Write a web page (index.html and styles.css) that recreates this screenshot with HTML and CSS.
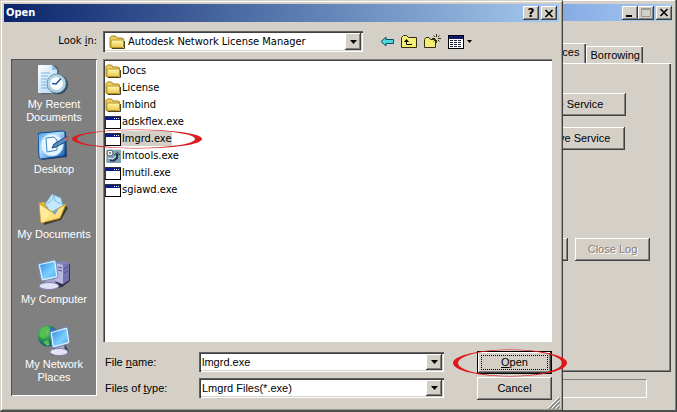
FILE: index.html
```
<!DOCTYPE html>
<html lang="en">
	<head>
		<meta charset="UTF-8" />
		<meta name="viewport" content="width=device-width, initial-scale=1.0" />
		<title>Open</title>
		<link rel="stylesheet" href="styles.css">
	</head>
	<body>
		<!-- shared icons -->
		<svg class="defs" width="0" height="0" aria-hidden="true">
			<defs>
				<linearGradient id="gFolder" x1="0" y1="0" x2="0" y2="1">
					<stop offset="0" stop-color="#fff8b0" /><stop offset="1" stop-color="#e8c84c" />
				</linearGradient>
				<linearGradient id="gScreen" x1="0" y1="0" x2="1" y2="1">
					<stop offset="0" stop-color="#2f8cec" /><stop offset="0.6" stop-color="#7cd0fa" /><stop offset="1" stop-color="#50a8f0" />
				</linearGradient>
				<linearGradient id="gPaper" x1="0" y1="0" x2="1" y2="1">
					<stop offset="0" stop-color="#ffffff" /><stop offset="1" stop-color="#a8d4f6" />
				</linearGradient>
				<linearGradient id="gBlue" x1="0" y1="0" x2="1" y2="1">
					<stop offset="0" stop-color="#4a98e4" /><stop offset="0.4" stop-color="#b4e0fc" /><stop offset="1" stop-color="#0c50b4" />
				</linearGradient>
				<radialGradient id="gGlobe" cx="0.35" cy="0.3" r="0.8">
					<stop offset="0" stop-color="#8ae07a" /><stop offset="0.45" stop-color="#289a48" /><stop offset="1" stop-color="#0a3c9c" />
				</radialGradient>
			</defs>
			<symbol id="folder" viewBox="0 0 16 16">
				<path d="M1 13V3.500L2.500 2H6.500L8 4H13.500L14.500 5V13L13.500 14H2Z" fill="#e9cf5c" stroke="#a88418" />
				<path d="M2 13.500V7L3.500 6H14.500V12.500L13.500 13.500Z" fill="url(#gFolder)" stroke="#b89428" />
				<path d="M15.500 7V14.500H3" fill="none" stroke="#4c4220" />
			</symbol>
			<symbol id="exe" viewBox="0 0 16 16">
				<rect x="0.500" y="2.500" width="15" height="12" fill="#fff" stroke="#303030" />
				<rect x="1" y="3" width="14" height="3" fill="#0a1a8c" />
				<path d="M9 4.500h1M11 4.500h1M13 4.500h1" stroke="#fff" />
				<path d="M0 14.500H16M15.500 3V15" stroke="#000" />
			</symbol>
			<symbol id="tools" viewBox="0 0 16 16">
				<rect x="1" y="2" width="15" height="13" fill="#7ca2b0" />
				<path d="M1 2H16M1.500 2V15" stroke="#a8c0c8" />
				<circle cx="5" cy="5" r="3" fill="#f4f4ec" stroke="#59636a" />
				<circle cx="5" cy="5" r="1" fill="#59636a" />
				<path d="M5 12.500H9L12 10V6" fill="none" stroke="#25315c" stroke-width="2" />
				<path d="M9.500 7L12 4.500L15 7" fill="none" stroke="#25315c" />
				<path d="M3 10L8 11L11 8" fill="none" stroke="#e8e8e8" />
			</symbol>
			<symbol id="close" viewBox="0 0 10 9">
				<path d="M1.500 1L8.500 8M8.500 1L1.500 8" stroke="#000" stroke-width="1.600" />
			</symbol>
			<symbol id="arrow" viewBox="0 0 7 4"><path d="M0 0H7L3.500 4Z" fill="#000" /></symbol>
		</svg>

		<div class="desktop">
			<form class="dialog" onsubmit="return false">
				<div class="titlebar">
					<h1>Open</h1>
					<button type="button" class="caption" aria-label="Help">?</button>
					<button type="button" class="caption" aria-label="Close"><svg width="10" height="9"><use href="#close" /></svg></button>
				</div>

				<div class="content">
					<label class="look-label" for="lookin">Look <u>i</u>n:</label>
					<div class="look-row">
						<div class="combo look">
							<svg width="16" height="16"><use href="#folder" /></svg>
							<select id="lookin">
								<option>Autodesk Network License Manager</option>
							</select>
							<span class="drop"><svg width="7" height="4"><use href="#arrow" /></svg></span>
						</div>
						<div class="toolbar">
							<button type="button" aria-label="Back">
								<svg width="14" height="16" viewBox="0 0 14 16"><path d="M1 7.500L6 3V5.500H13.500V9.500H6V12Z" fill="#4ad8dc" stroke="#075060" /></svg>
							</button>
							<button type="button" aria-label="Up one level">
								<svg width="16" height="16" viewBox="0 0 16 16">
									<path d="M0.500 13.500V3.500L2.500 1.500H5.500L7.500 3.500H15.500V13.500Z" fill="#f6ee70" stroke="#333010" />
									<path d="M3 8L5.500 5L8 8Z" fill="#000" />
									<path d="M5.500 7V10.500H11" fill="none" stroke="#000" />
								</svg>
							</button>
							<button type="button" aria-label="New folder">
								<svg width="17" height="16" viewBox="0 0 17 16">
									<path d="M0.500 13.500V5.500L2 3.500H5L6.500 5.500H11.500V13.500Z" fill="#f6ee70" stroke="#333010" />
									<path d="M12.500 0V3M12.500 6V9M8 4.500H11M14 4.500H17M9.500 1.500L11 3M15.500 1.500L14 3M15.500 7.500L14 6M9.500 7.500L11 6" stroke="#333010" />
								</svg>
							</button>
							<button type="button" class="views" aria-label="Views">
								<svg width="16" height="14" viewBox="0 0 16 14">
									<rect x="0.500" y="0.500" width="15" height="13" fill="#fff" stroke="#000" />
									<rect x="1" y="1" width="14" height="3" fill="#10186c" />
									<path d="M2 5.500H14M2 7.500H14M2 9.500H14M2 11.500H14" stroke="#202840" stroke-dasharray="3 1" />
								</svg>
								<svg width="5" height="3" viewBox="0 0 7 4"><use href="#arrow" /></svg>
							</button>
						</div>
					</div>

					<nav class="places">
						<a href="#">
							<svg width="32" height="32" viewBox="0 0 32 32">
								<path d="M3 4L18 1L21 5V29L3 31Z" fill="#43566c" opacity="0.5" />
								<path d="M0 1H14L19 6V29H0Z" fill="url(#gPaper)" />
								<path d="M14 1V6H19Z" fill="#8cbce8" />
								<path d="M3 9H12M3 12H10M3 15H9M3 18H8M3 21H8M3 24H10" stroke="#7cb0e0" />
								<circle cx="20" cy="20.500" r="10" fill="#34485c" />
								<circle cx="18.500" cy="19.500" r="9.500" fill="#b4d8ea" stroke="#6e8fa4" />
								<circle cx="18.500" cy="19.500" r="7" fill="#f8fcff" stroke="#a4c4d4" />
								<path d="M23 14.500L18 20L14 19.500" fill="none" stroke="#28568a" stroke-width="1.500" />
							</svg>
							<span>My Recent<br>Documents</span>
						</a>
						<a href="#">
							<svg width="32" height="32" viewBox="0 0 32 32">
								<path d="M3 4L28 3L29 28L4 31Z" fill="#233c62" />
								<path d="M0 6Q0 4 2 4L25 2Q27 2 27 4L27 25Q27 27 25 27L3 30Q1 30 1 28Z" fill="url(#gBlue)" stroke="#0c4a9c" />
								<ellipse cx="14" cy="16" rx="11" ry="11" fill="#e4f6ff" stroke="#b4e0fa" />
								<path d="M8 9L16 8L19 11V21L9 23Z" fill="#f8fdff" stroke="#3c88c0" />
								<path d="M14 19L16 15L26 9L30 8L29 12L18 18Z" fill="#4e8ec4" stroke="#1c4880" />
								<path d="M26 9L31 8L29 12Z" fill="#e45c48" />
							</svg>
							<span>Desktop</span>
						</a>
						<a href="#">
							<svg width="32" height="32" viewBox="0 0 32 32">
								<path d="M5 19L26 10L30 14L23 26L6 31Z" fill="#3c3c30" />
								<path d="M1 9L6 8L10 11L27 10L21 25L3 29Z" fill="#e8b838" />
								<path d="M7 10L14 0L23 4L25 12L14 21Z" fill="#c4e8fc" stroke="#68a8d0" />
								<path d="M9 10L14 6L16 1L17 7L23 10" fill="none" stroke="#80bce0" />
								<path d="M1 9L14 18L28 10L22 24L3 29Z" fill="#fbe07c" stroke="#c89828" />
								<path d="M2 11L12 19L6 28L3 28Z" fill="#ffed9c" />
								<path d="M14 18L21 14L17 21Z" fill="#70acc8" />
							</svg>
							<span>My Documents</span>
						</a>
						<a href="#">
							<svg width="32" height="32" viewBox="0 0 32 32">
								<path d="M20 4L32 5V22L24 28L12 31Z" fill="#30304c" />
								<path d="M17 4L25 2L31 4V21L24 25L17 22Z" fill="#8484bc" />
								<path d="M17 4L25 6V25L17 22Z" fill="#b8b8e0" />
								<path d="M25 6L31 4V21L25 25Z" fill="#7474ac" />
								<path d="M20 8L24 9M20 11L24 12M26 10L30 8M26 14L30 12" stroke="#50508c" />
								<path d="M7 20L17 20L18 27L8 27Z" fill="#a4a4cc" />
								<ellipse cx="11" cy="27" rx="10" ry="3.500" fill="#e0e0f6" stroke="#8484b4" />
								<path d="M0 5L16 1Q18 1 18 3L20 17Q20 19 18 19L5 22Q3 22 3 20Z" fill="#d8ecff" stroke="#7090b4" />
								<path d="M2 6L16 3L18 17L5 20Z" fill="url(#gScreen)" />
							</svg>
							<span>My Computer</span>
						</a>
						<a href="#">
							<svg width="32" height="32" viewBox="0 0 32 32">
								<circle cx="10" cy="12" r="10.500" fill="url(#gGlobe)" />
								<path d="M3 5Q8 1 12 4L8 8L10 12L5 15L1 12ZM5 18L10 16L12 21L9 22Z" fill="#58bc50" />
								<path d="M12 3Q17 4 19 8L13 10Z" fill="#2868c8" />
								<path d="M16 24L27 21L31 28L22 32L13 31Z" fill="#343450" />
								<path d="M17 20L26 19L27 27L18 28Z" fill="#a8a8cc" />
								<ellipse cx="21" cy="28" rx="9" ry="3.500" fill="#e4e4f6" stroke="#8888b0" />
								<path d="M12 8L28 3Q30 3 30 5L32 18Q32 20 30 20L16 24Q14 24 14 22Z" fill="#d8ecff" stroke="#6080a8" />
								<path d="M14 9L28 5L30 18L16 22Z" fill="url(#gScreen)" />
							</svg>
							<span>My Network<br>Places</span>
						</a>
					</nav>

					<div class="main">
						<ul class="files">
							<li><svg width="16" height="16"><use href="#folder" /></svg><span>Docs</span></li>
							<li><svg width="16" height="16"><use href="#folder" /></svg><span>License</span></li>
							<li><svg width="16" height="16"><use href="#folder" /></svg><span>lmbind</span></li>
							<li><svg width="16" height="16"><use href="#exe" /></svg><span>adskflex.exe</span></li>
							<li class="selected">
								<svg width="16" height="16"><use href="#exe" /></svg><span>lmgrd.exe</span>
								<svg class="ring ring-file" width="130" height="20" viewBox="0 0 130 20">
									<path fill-rule="evenodd" d="M0 10A65 9.500 0 0 1 130 10A65 9.500 0 0 1 0 10ZM5 10A59 9 0 0 0 123 10A59 9 0 0 0 5 10Z" fill="#d81c20" />
								</svg>
							</li>
							<li><svg width="16" height="16"><use href="#tools" /></svg><span>lmtools.exe</span></li>
							<li><svg width="16" height="16"><use href="#exe" /></svg><span>lmutil.exe</span></li>
							<li><svg width="16" height="16"><use href="#exe" /></svg><span>sgiawd.exe</span></li>
						</ul>

						<div class="fields">
							<label for="filename">File <u>n</u>ame:</label>
							<div class="combo">
								<input id="filename" type="text" value="lmgrd.exe" />
								<button type="button" class="drop" aria-label="Recent names"><svg width="7" height="4"><use href="#arrow" /></svg></button>
							</div>
							<div class="open-wrap">
								<button type="submit" class="btn default"><span><u>O</u>pen</span></button>
								<svg class="ring ring-open" width="114" height="28" viewBox="0 0 114 28">
									<path fill-rule="evenodd" d="M0 14A57 13.500 0 0 1 114 14A57 13.500 0 0 1 0 14ZM5 14A52 13 0 0 0 109 14A52 13 0 0 0 5 14Z" fill="#e01818" />
								</svg>
							</div>
							<label for="filetype">Files of <u>t</u>ype:</label>
							<div class="combo">
								<select id="filetype">
									<option>Lmgrd Files(*.exe)</option>
								</select>
								<span class="drop"><svg width="7" height="4"><use href="#arrow" /></svg></span>
							</div>
							<button type="button" class="btn">Cancel</button>
						</div>
					</div>
				</div>
				<svg class="grip" width="12" height="12" viewBox="0 0 12 12">
					<path d="M0 11L11 0M4 11L11 4M8 11L11 8" stroke="#fff" />
					<path d="M1 12L12 1M5 12L12 5M9 12L12 9" stroke="#808080" stroke-width="1.500" />
				</svg>
			</form>

			<!-- LMTOOLS window, mostly covered by the dialog -->
			<div class="behind">
				<div class="titlebar">
					<button type="button" class="caption" aria-label="Minimize"><svg width="10" height="9"><path d="M1 8H7" stroke="#000" stroke-width="2" /></svg></button>
					<button type="button" class="caption" aria-label="Maximize" disabled><svg width="10" height="9" viewBox="0 0 10 9"><path d="M1 0.500H9.500V8.500H0.500V0.500M0 1.500H10" fill="none" stroke="#999" /></svg></button>
					<button type="button" class="caption gap" aria-label="Close"><svg width="10" height="9"><use href="#close" /></svg></button>
				</div>
				<div class="tabs">
					<button type="button" class="tab active">Services</button>
					<button type="button" class="tab">Borrowing</button>
				</div>
				<div class="panel">
					<button type="button" class="btn save">Save Service</button>
					<button type="button" class="btn remove">Remove Service</button>
					<div class="log">
						<button type="button" class="btn" aria-label="View log"></button>
						<button type="button" class="btn" disabled>Close Log</button>
					</div>
				</div>
				<div class="status"></div>
			</div>
		</div>
	</body>
</html>
```
FILE: styles.css
```
* {
	box-sizing: border-box;
}
body {
	margin: 0;
	background-color: #d4d0c8;
	color: #000;
	font-family: "Liberation Sans", Arial, sans-serif;
	font-size: 11px;
	line-height: 13px;
}
svg {
	display: block;
	flex: none;
}
button, input, select {
	font: inherit;
	color: inherit;
	margin: 0;
	padding: 0;
	border: 0;
	border-radius: 0;
	background: none;
	outline: none;
}
.defs {
	position: absolute;
}
.desktop {
	display: flex;
	min-height: 100vh;
}

/* windows */
.dialog {
	position: relative;
	z-index: 1;
	flex: 1;
	display: flex;
	flex-direction: column;
	padding: 3px 3px 0 3px;
	background-color: #d4d0c8;
	border: 1px solid #d4d0c8;
	border-right-color: #404040;
	border-bottom: 2px solid #505050;
	box-shadow: inset 1px 1px #fff, inset -1px -1px #a09c94;
}
.titlebar {
	display: flex;
	align-items: center;
	height: 18px;
	padding: 0 2px;
	background: linear-gradient(90deg, #0a246a, #a6caf0);
}
.titlebar h1 {
	flex: 1;
	margin: 0;
	color: #fff;
	font-family: "DejaVu Sans Condensed", "DejaVu Sans", sans-serif;
	font-size: 11px;
	line-height: 18px;
}
.caption {
	display: flex;
	align-items: center;
	justify-content: center;
	width: 16px;
	height: 14px;
	font-family: "DejaVu Sans", sans-serif;
	font-size: 12px;
	font-weight: bold;
	background-color: #d4d0c8;
	box-shadow: inset -1px -1px #404040, inset 1px 1px #fff, inset -2px -2px #808080;
}
.dialog .caption + .caption,
.caption.gap {
	margin-left: 2px;
}
.content {
	flex: 1;
	display: grid;
	grid-template-columns: 86px 1fr;
	grid-template-rows: 21px 1fr;
	gap: 7px 6px;
	padding: 9px 7px 11px 7px;
}

/* look in */
.look-label {
	font-family: "DejaVu Sans Condensed", "DejaVu Sans", sans-serif;
	text-align: right;
	line-height: 20px;
}
.look-row {
	display: flex;
}
.combo {
	display: flex;
	align-items: center;
	height: 20px;
	padding: 2px;
	background-color: #fff;
	box-shadow: inset 1px 1px #606060, inset 2px 2px #404040, inset -1px -1px #fff, inset -2px -2px #d4d0c8;
}
.combo input, .combo select {
	flex: 1;
	min-width: 0;
	height: 16px;
	padding-left: 1px;
	appearance: none;
}
.look {
	flex: 1;
	height: 21px;
	padding-left: 6px;
	font-family: "DejaVu Sans Condensed", "DejaVu Sans", sans-serif;
}
.combo.look select {
	padding-left: 3px;
}
.drop {
	display: flex;
	align-items: center;
	justify-content: center;
	width: 16px;
	height: 100%;
	pointer-events: none;
	background-color: #d4d0c8;
	box-shadow: inset -1px -1px #404040, inset 1px 1px #fff, inset -2px -2px #808080;
}
.toolbar {
	display: flex;
	align-items: center;
	gap: 7px;
	width: 189px;
	padding-left: 17px;
}
.views {
	display: flex;
	align-items: center;
	gap: 3px;
}

/* places bar */
.places {
	display: flex;
	flex-direction: column;
	margin-bottom: 3px;
	padding-top: 5px;
	background-color: #808080;
	box-shadow: inset 1px 1px #505050, inset -1px -1px #fff;
}
.places a {
	display: flex;
	flex-direction: column;
	align-items: center;
	gap: 2px;
	min-height: 65px;
	color: #fff;
	text-align: center;
	text-decoration: none;
}

/* file list */
.main {
	display: flex;
	flex-direction: column;
	gap: 9px;
}
.files {
	flex: 1;
	margin: 0;
	padding: 3px 2px;
	list-style: none;
	font-family: "DejaVu Sans Condensed", "DejaVu Sans", sans-serif;
	background-color: #fff;
	box-shadow: inset 1px 1px #808080, inset 2px 2px #404040, inset -1px -1px #fff;
}
.files li {
	display: flex;
	align-items: center;
	height: 17px;
}
.files span {
	padding: 1px;
}
.selected {
	position: relative;
}
.selected span {
	background-color: #d4d0c8;
}
.ring {
	position: absolute;
	pointer-events: none;
}
.ring-file {
	left: -33px;
	top: -1px;
}
.ring-open {
	left: -24px;
	top: -2px;
}

/* bottom fields */
.fields {
	display: grid;
	grid-template-columns: 96px 1fr 75px;
	grid-template-rows: 22px 22px;
	row-gap: 4px;
	align-items: center;
}
.fields label {
	padding-left: 2px;
}
.fields .combo {
	margin-right: 33px;
}
.open-wrap {
	position: relative;
}
.btn {
	width: 75px;
	height: 23px;
	white-space: nowrap;
	background-color: #d4d0c8;
	box-shadow: inset -1px -1px #404040, inset 1px 1px #fff, inset -2px -2px #808080;
}
.btn.default {
	display: block;
	padding: 3px;
	border: 1px solid #000;
}
.default span {
	display: block;
	border: 1px dotted #000;
}
.btn:disabled {
	color: #808080;
	text-shadow: 1px 1px #fff;
}
.grip {
	position: absolute;
	right: 2px;
	bottom: 1px;
}

/* window behind */
.behind {
	display: flex;
	flex-direction: column;
	width: 114px;
	padding: 4px 4px 12px 0;
	overflow: hidden;
	border-right: 1px solid #404040;
	border-bottom: 2px solid #505050;
	box-shadow: inset -1px 0 #808080, inset 0 1px #fff;
}
.behind .titlebar {
	justify-content: flex-end;
	height: 17px;
	padding: 0;
	background: linear-gradient(90deg, #86abe4, #a6caf0);
}
.tabs {
	display: flex;
	align-items: flex-end;
	justify-content: flex-end;
	height: 42px;
	padding-right: 29px;
}
.tab {
	flex: none;
	height: 17px;
	padding: 0 3px;
	white-space: nowrap;
	border-top: 1px solid #fff;
	border-left: 1px solid #fff;
	box-shadow: inset -1px 0 #404040, inset -2px 0 #808080;
}
.tab.active {
	height: 20px;
	padding: 0 7px 2px 7px;
}
.panel {
	flex: 1;
	display: flex;
	flex-direction: column;
	align-items: flex-end;
	margin-right: 1px;
	padding: 29px 21px 0 0;
	border-top: 1px solid #fff;
	box-shadow: inset -1px -1px #404040, inset -2px -2px #808080;
}
.panel .btn {
	flex: none;
}
.panel .save, .panel .remove {
	width: 110px;
	margin-right: 24px;
}
.panel .remove {
	margin-top: 11px;
	margin-right: 25px;
}
.log {
	display: flex;
	gap: 7px;
	margin-top: 88px;
}
.status {
	height: 19px;
	margin: 7px 25px 0 0;
	border-top: 1px solid #808080;
	border-right: 1px solid #fff;
	border-bottom: 1px solid #fff;
}
```
